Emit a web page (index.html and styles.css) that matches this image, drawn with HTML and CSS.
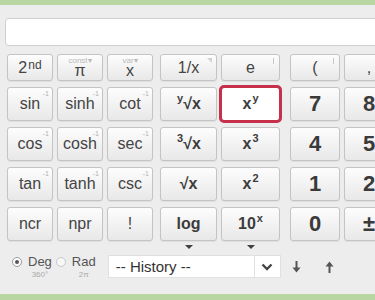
FILE: index.html
```html
<!DOCTYPE html>
<html lang="en">
<head>
    <meta charset="UTF-8">
    <meta name="viewport" content="width=device-width, initial-scale=1.0">
    <title>Scientific Calculator</title>
    <link rel="stylesheet" href="styles.css">
</head>
<body>
    <div class="app">
        <div class="topbar"></div>
        <div class="display"></div>

        <div class="keypad">
            <!-- functions -->
            <div class="group fn">
                <button class="key small-row">2<sup>nd</sup></button>
                <button class="key small-row"><span class="hint">const&#9662;</span><span class="low">&pi;</span></button>
                <button class="key small-row"><span class="hint">var&#9662;</span><span class="low">x</span></button>

                <button class="key">sin<span class="inv">-1</span></button>
                <button class="key">sinh<span class="inv">-1</span></button>
                <button class="key">cot<span class="inv">-1</span></button>

                <button class="key">cos<span class="inv">-1</span></button>
                <button class="key">cosh<span class="inv">-1</span></button>
                <button class="key">sec<span class="inv">-1</span></button>

                <button class="key">tan<span class="inv">-1</span></button>
                <button class="key">tanh<span class="inv">-1</span></button>
                <button class="key">csc<span class="inv">-1</span></button>

                <button class="key">ncr</button>
                <button class="key">npr</button>
                <button class="key">!</button>
            </div>

            <!-- operators -->
            <div class="group ops">
                <button class="key small-row plain">1/x<span class="corner"></span></button>
                <button class="key small-row plain">e<span class="tick"></span></button>

                <button class="key"><sup>y</sup>&radic;x</button>
                <button class="key selected">x<sup>y</sup></button>

                <button class="key"><sup>3</sup>&radic;x</button>
                <button class="key">x<sup>3</sup></button>

                <button class="key">&radic;x</button>
                <button class="key">x<sup>2</sup></button>

                <button class="key more">log</button>
                <button class="key more">10<sup>x</sup></button>
            </div>

            <!-- numbers -->
            <div class="group num">
                <button class="key small-row plain">(<span class="tick"></span></button>
                <button class="key small-row plain">,</button>

                <button class="key">7</button>
                <button class="key">8</button>

                <button class="key">4</button>
                <button class="key">5</button>

                <button class="key">1</button>
                <button class="key">2</button>

                <button class="key">0</button>
                <button class="key">&plusmn;</button>
            </div>
        </div>

        <div class="footer">
            <label class="unit">
                <span class="radio checked"></span>
                <span class="unit-text">Deg<small>360&deg;</small></span>
            </label>
            <label class="unit">
                <span class="radio"></span>
                <span class="unit-text">Rad<small>2&pi;</small></span>
            </label>

            <div class="history">
                <span class="history-label">-- History --</span>
                <span class="history-arrow">
                    <svg width="12" height="8" viewBox="0 0 12 8"><path d="M1.5 1.5 L6 6 L10.5 1.5" fill="none" stroke="#444" stroke-width="2.4"/></svg>
                </span>
            </div>

            <span class="step">
                <svg width="9" height="12" viewBox="0 0 9 12"><path d="M4.5 0 V10" stroke="#555" stroke-width="2"/><path d="M0.5 6.5 L4.5 11.5 L8.5 6.5 Z" fill="#555"/></svg>
            </span>
            <span class="step">
                <svg width="9" height="12" viewBox="0 0 9 12"><path d="M4.5 12 V2" stroke="#555" stroke-width="2"/><path d="M0.5 5.5 L4.5 0.5 L8.5 5.5 Z" fill="#555"/></svg>
            </span>
        </div>

        <div class="bottombar"></div>
    </div>
</body>
</html>
```

FILE: styles.css
```css
body {
    margin: 0;
    padding: 0;
    font-family: "Liberation Sans", Arial, sans-serif;
    background-color: #ededed;
    overflow: hidden;
}

.app {
    display: flex;
    flex-direction: column;
    width: 375px;
    height: 300px;
    overflow: hidden;
}

.topbar {
    height: 5px;
    background-color: #b7d6a2;
    flex-shrink: 0;
}

.display {
    margin: 13px 0 0 5px;
    width: 400px;
    height: 28px;
    flex-shrink: 0;
    background-color: #fff;
    border: 1px solid #cfcfcf;
    border-radius: 4px;
    box-sizing: border-box;
}

/* keypad */

.keypad {
    display: flex;
    margin-top: 8px;
    padding-left: 7px;
    flex-shrink: 0;
}

.group {
    display: grid;
    grid-template-rows: 27px repeat(4, 34px);
    row-gap: 6px;
    column-gap: 4px;
}

.fn {
    grid-template-columns: repeat(3, 46px);
}

.ops {
    grid-template-columns: 57px 59px;
    margin-left: 7px;
}

.num {
    grid-template-columns: 50px 50px;
    margin-left: 10px;
}

.key {
    position: relative;
    display: flex;
    align-items: center;
    justify-content: center;
    padding: 0;
    margin: 0;
    border: 1px solid #c4c4c4;
    border-radius: 3px;
    background: linear-gradient(#fdfdfd, #e8e8e8);
    box-shadow: 0 1px 1px rgba(0, 0, 0, 0.06);
    font-family: "Liberation Sans", Arial, sans-serif;
    font-size: 16px;
    color: #444;
    box-sizing: border-box;
}

.key sup {
    font-size: 11px;
    line-height: 1;
    position: relative;
    top: -6px;
    margin-left: 1px;
}

.fn .key sup {
    font-size: 12px;
    top: -3px;
}

.ops .key {
    font-weight: bold;
    color: #3c3c3c;
}

.num .key {
    font-size: 22px;
    font-weight: bold;
    color: #3a3a3a;
}

.ops .key.plain,
.num .key.plain {
    font-weight: normal;
    font-size: 16px;
    color: #444;
}

.key .low {
    margin-top: 6px;
}

.key .hint {
    position: absolute;
    top: 1px;
    left: 0;
    right: 0;
    text-align: center;
    font-size: 8px;
    color: #b8b8b8;
    line-height: 9px;
}

.key .inv {
    position: absolute;
    top: 2px;
    right: 3px;
    font-size: 7px;
    color: #b0b0b0;
    line-height: 8px;
}

.key .corner {
    position: absolute;
    top: 3px;
    right: 4px;
    width: 0;
    height: 0;
    border-left: 5px solid transparent;
    border-top: 5px solid #d2d2d2;
}

.key .tick {
    position: absolute;
    top: 3px;
    right: 5px;
    width: 1px;
    height: 6px;
    background-color: #c8c8c8;
}

.key.selected {
    outline: 3px solid #c7304a;
    outline-offset: -1px;
    background: #fff;
}

.key.more::after {
    content: "";
    position: absolute;
    bottom: -9px;
    left: 50%;
    margin-left: -4px;
    border-left: 4px solid transparent;
    border-right: 4px solid transparent;
    border-top: 4px solid #3f3f3f;
}

/* footer */

.footer {
    flex: 1;
    display: flex;
    align-items: center;
    padding: 0 0 2px 12px;
}

.unit {
    display: flex;
    align-items: flex-start;
    margin-right: 4px;
}

.radio {
    width: 10px;
    height: 10px;
    margin-top: 4px;
    margin-right: 6px;
    border: 1px solid #c8c8c8;
    border-radius: 50%;
    background-color: #f7f7f7;
    box-sizing: border-box;
    position: relative;
}

.radio.checked {
    border-color: #9a9a9a;
    background-color: #fff;
}

.radio.checked::after {
    content: "";
    position: absolute;
    top: 2px;
    left: 2px;
    width: 4px;
    height: 4px;
    border-radius: 50%;
    background-color: #555;
}

.unit-text {
    display: flex;
    flex-direction: column;
    align-items: center;
    font-size: 13px;
    line-height: 17px;
    color: #555;
}

.unit-text small {
    font-size: 8px;
    line-height: 10px;
    color: #aaa;
}

.history {
    display: flex;
    align-items: stretch;
    margin-left: 8px;
    width: 173px;
    height: 23px;
    background-color: #fff;
    border: 1px solid #e0e0e0;
    box-sizing: border-box;
}

.history-label {
    flex: 1;
    display: flex;
    align-items: center;
    padding-left: 7px;
    font-size: 15px;
    color: #333;
}

.history-arrow {
    width: 25px;
    display: flex;
    align-items: center;
    justify-content: center;
    border-left: 1px solid #e2e2e2;
}

.step {
    display: flex;
    margin-left: 11px;
    margin-right: 13px;
}

.bottombar {
    height: 6px;
    background-color: #b7d6a2;
    flex-shrink: 0;
}
```
